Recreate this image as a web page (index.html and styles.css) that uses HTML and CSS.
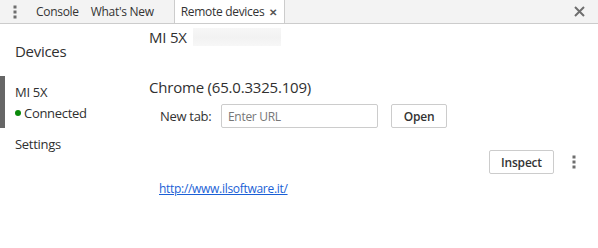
FILE: index.html
```html
<!DOCTYPE html>
<html>
<head>
<meta charset="utf-8">
<link rel="stylesheet" href="styles.css">
</head>
<body>
<div class="tabbar">
  <div class="menu">
    <svg width="4" height="14" viewBox="0 0 4 14"><rect x="0.5" y="0.5" width="3" height="3" fill="#6e6e6e"/><rect x="0.5" y="5.5" width="3" height="3" fill="#6e6e6e"/><rect x="0.5" y="10.5" width="3" height="3" fill="#6e6e6e"/></svg>
  </div>
  <div class="tab">Console</div>
  <div class="tab">What's New</div>
  <div class="tab active">Remote devices <span class="tabx">&#x2715;</span></div>
  <div class="spacer"></div>
  <div class="close">
    <svg width="11" height="11" viewBox="0 0 11 11"><path d="M1 1L10 10M10 1L1 10" stroke="#6e6e6e" stroke-width="2"/></svg>
  </div>
</div>
<div class="content">
  <div class="sidebar">
    <div class="side-title">Devices</div>
    <div class="device selected">
      <div class="device-name">MI 5X</div>
      <div class="device-status"><span class="dot"></span>Connected</div>
    </div>
    <div class="side-item">Settings</div>
  </div>
  <div class="main">
    <div class="dev-header">MI 5X <span class="serial"></span></div>
    <div class="browser-title">Chrome (65.0.3325.109)</div>
    <div class="newtab">
      <span class="label">New tab:</span>
      <input class="url" type="text" placeholder="Enter URL">
      <button class="btn">Open</button>
    </div>
    <div class="page-row">
      <button class="btn">Inspect</button>
      <svg class="kebab" width="4" height="14" viewBox="0 0 4 14"><rect x="0.5" y="0.5" width="3" height="3" fill="#6e6e6e"/><rect x="0.5" y="5.5" width="3" height="3" fill="#6e6e6e"/><rect x="0.5" y="10.5" width="3" height="3" fill="#6e6e6e"/></svg>
    </div>
    <div class="link-row"><a class="link" href="#">http://www.ilsoftware.it/</a></div>
  </div>
</div>
</body>
</html>
```
FILE: styles.css
```css
html, body {
  margin: 0;
  padding: 0;
  background: #fff;
  font-family: "Open Sans", "Liberation Sans", sans-serif;
  color: #303030;
}
.tabbar {
  display: flex;
  align-items: stretch;
  height: 23px;
  background: #f3f3f3;
  border-bottom: 1px solid #cccccc;
  font-size: 12px;
  color: #333;
}
.menu {
  width: 30px;
  display: flex;
  align-items: center;
  justify-content: center;
}
.tab {
  display: flex;
  align-items: center;
  padding: 0 6px;
  letter-spacing: -0.3px;
}
.tab.active {
  background: #fff;
  border-left: 1px solid #cccccc;
  border-right: 1px solid #cccccc;
  margin-left: 14px;
  padding: 0 7px 0 6px;
}
.tabx {
  font-size: 10px;
  margin-left: 5px;
  color: #555;
  font-weight: bold;
}
.spacer { flex: 1; }
.close {
  width: 30px;
  display: flex;
  align-items: center;
  justify-content: center;
  margin-right: 4px;
}
.content {
  display: flex;
}
.sidebar {
  width: 149px;
  flex: none;
}
.side-title {
  font-size: 15px;
  padding: 17px 0 0 15px;
  height: 35px;
  letter-spacing: -0.3px;
}
.device {
  border-left: 5px solid #666;
  padding: 5px 0 5px 10px;
  height: 42px;
}
.device-name {
  font-size: 13px;
  line-height: 22px;
  letter-spacing: -0.3px;
}
.device-status {
  font-size: 13px;
  line-height: 20px;
  display: flex;
  align-items: center;
  letter-spacing: -0.3px;
}
.dot {
  width: 6px;
  height: 6px;
  border-radius: 50%;
  background: #0a8a0a;
  margin-right: 3px;
}
.side-item {
  font-size: 13px;
  padding: 6px 0 0 15px;
  line-height: 20px;
  letter-spacing: -0.3px;
}
.main {
  flex: 1;
  display: flex;
  flex-direction: column;
}
.dev-header {
  font-size: 15px;
  line-height: 20px;
  padding-top: 3px;
  display: flex;
  align-items: center;
  letter-spacing: -0.2px;
}
.serial {
  display: inline-block;
  width: 88px;
  height: 18px;
  margin-left: 6px;
  background: linear-gradient(to bottom, #f7f7f7, #f2f2f2, #f7f7f7);
}
.browser-title {
  font-size: 15px;
  line-height: 20px;
  margin-top: 30px;
  letter-spacing: -0.2px;
}
.newtab {
  display: flex;
  align-items: center;
  margin-top: 7px;
  padding-left: 11px;
  height: 24px;
}
.label {
  font-size: 13px;
  color: #333;
  letter-spacing: -0.3px;
  width: 61px;
}
.url {
  width: 157px;
  height: 24px;
  box-sizing: border-box;
  border: 1px solid #cccccc;
  border-radius: 2px;
  padding: 0 6px;
  font-family: inherit;
  font-size: 12px;
  outline: none;
  letter-spacing: -0.3px;
}
.url::placeholder { color: #777; }
.btn {
  height: 24px;
  box-sizing: border-box;
  border: 1px solid #cccccc;
  border-radius: 2px;
  background: #fff;
  font-family: inherit;
  font-size: 12px;
  font-weight: 600;
  color: #333;
  padding: 0 12px;
  letter-spacing: -0.2px;
}
.newtab .btn { margin-left: 13px; width: 56px; padding: 0; }
.page-row {
  display: flex;
  justify-content: flex-end;
  align-items: center;
  margin-top: 22px;
  padding-right: 22px;
  height: 24px;
}
.page-row .btn { width: 65px; padding: 0; }
.kebab { margin-left: 18px; }
.link-row {
  margin-top: 4px;
  padding-left: 10px;
  line-height: 18px;
}
.link {
  font-size: 12px;
  color: #1a5fd6;
  letter-spacing: -0.3px;
}
```
